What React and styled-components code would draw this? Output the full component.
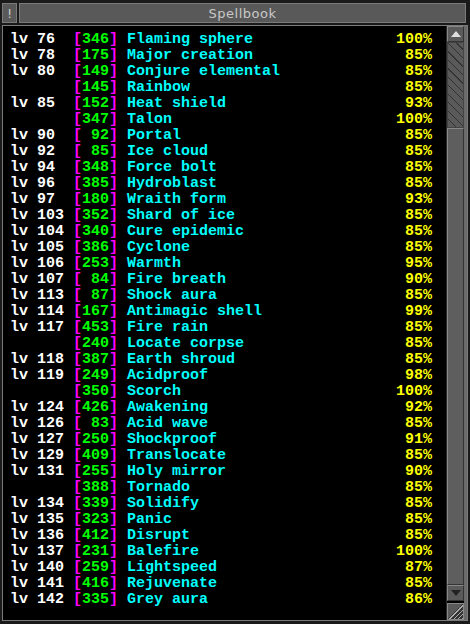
import React from 'react';
import styled, { createGlobalStyle } from 'styled-components';

const GlobalStyle = createGlobalStyle`
	html, body {
		margin: 0;
		padding: 0;
		background: #000;
	}
`;

const spells = [
	[76, '346', 'Flaming sphere', 100],
	[78, '175', 'Major creation', 85],
	[80, '149', 'Conjure elemental', 85],
	[null, '145', 'Rainbow', 85],
	[85, '152', 'Heat shield', 93],
	[null, '347', 'Talon', 100],
	[90, ' 92', 'Portal', 85],
	[92, ' 85', 'Ice cloud', 85],
	[94, '348', 'Force bolt', 85],
	[96, '385', 'Hydroblast', 85],
	[97, '180', 'Wraith form', 93],
	[103, '352', 'Shard of ice', 85],
	[104, '340', 'Cure epidemic', 85],
	[105, '386', 'Cyclone', 85],
	[106, '253', 'Warmth', 95],
	[107, ' 84', 'Fire breath', 90],
	[113, ' 87', 'Shock aura', 85],
	[114, '167', 'Antimagic shell', 99],
	[117, '453', 'Fire rain', 85],
	[null, '240', 'Locate corpse', 85],
	[118, '387', 'Earth shroud', 85],
	[119, '249', 'Acidproof', 98],
	[null, '350', 'Scorch', 100],
	[124, '426', 'Awakening', 92],
	[126, ' 83', 'Acid wave', 85],
	[127, '250', 'Shockproof', 91],
	[129, '409', 'Translocate', 85],
	[131, '255', 'Holy mirror', 90],
	[null, '388', 'Tornado', 85],
	[134, '339', 'Solidify', 85],
	[135, '323', 'Panic', 85],
	[136, '412', 'Disrupt', 85],
	[137, '231', 'Balefire', 100],
	[140, '259', 'Lightspeed', 87],
	[141, '416', 'Rejuvenate', 85],
	[142, '335', 'Grey aura', 86]
];

const Window = styled.div`
	width: 470px;
	height: 624px;
	background: #1a1a1a;
	display: flex;
	flex-direction: column;
	box-sizing: border-box;
`;
const TitleBar = styled.div`
	display: flex;
	gap: 2px;
	height: 20px;
	padding: 3px 4px 0 2px;
`;
const TitleButton = styled.div`
	width: 13px;
	background: #595959;
	border: 1px solid #7a7a7a;
	color: #c8c8c8;
	font-family: 'DejaVu Sans', sans-serif;
	font-size: 13px;
	display: flex;
	align-items: center;
	justify-content: center;
`;
const Title = styled.div`
	flex: 1;
	background: #595959;
	border: 1px solid #7a7a7a;
	color: #c8c8c8;
	font-family: 'DejaVu Sans', sans-serif;
	font-size: 13px;
	letter-spacing: 0.5px;
	display: flex;
	align-items: center;
	justify-content: center;
`;
const Frame = styled.div`
	flex: 1;
	margin: 2px 2px 3px 2px;
	border: 1px solid #7a7a7a;
	background: #000;
	display: flex;
	min-height: 0;
`;
const List = styled.div`
	flex: 1;
	padding: 6px 14px 0 7px;
	font-family: 'Liberation Mono', monospace;
	font-weight: bold;
	font-size: 15px;
	line-height: 16px;
	white-space: pre;
`;
const Row = styled.div`
	display: flex;
	height: 16px;
`;
const Level = styled.span`
	width: 63px;
	color: #ffffff;
`;
const Bracket = styled.span`
	color: #ff00ff;
`;
const Cost = styled.span`
	color: #00ff00;
`;
const Name = styled.span`
	flex: 1;
	margin-left: 9px;
	color: #00ffff;
`;
const Pct = styled.span`
	color: #ffff00;
`;
const Scrollbar = styled.div`
	width: 17px;
	display: flex;
	flex-direction: column;
	border-left: 1px solid #2a2a2a;
	border-right: 3px solid #6a6a6a;
	background: #000;
`;
const ArrowButton = styled.div`
	height: 14px;
	background: #5a5a5a;
	border: 1px solid #888;
	border-right-color: #333;
	border-bottom-color: #333;
	display: flex;
	align-items: center;
	justify-content: center;
`;
const Track = styled.div`
	flex: ${(p) => p.grow};
	background: repeating-linear-gradient(
		45deg,
		#5a5a5a 0px,
		#5a5a5a 5px,
		#333 5px,
		#333 6px
	);
	border: 1px solid #444;
`;
const Thumb = styled.div`
	flex: ${(p) => p.grow};
	background: #5e5e5e;
	border: 1px solid #8a8a8a;
	border-right-color: #333;
	border-bottom-color: #333;
`;
const Corner = styled.div`
	height: 15px;
	margin-top: 2px;
	background: linear-gradient(135deg, #5a5a5a 50%, transparent 50%),
		repeating-linear-gradient(-45deg, #aaa 0px, #aaa 1px, #333 1px, #333 3px);
	border: 1px solid #888;
`;

function Arrow({ up }) {
	return (
		<svg width="10" height="6" viewBox="0 0 10 6">
			{up ? (
				<polygon points="0,6 5,0 10,6" fill="#ddd" />
			) : (
				<polygon points="0,0 5,6 10,0" fill="#222" />
			)}
		</svg>
	);
}

export default function App() {
	return (
		<Window>
			<GlobalStyle />
			<TitleBar>
				<TitleButton>!</TitleButton>
				<Title>Spellbook</Title>
			</TitleBar>
			<Frame>
				<List>
					{spells.map(([lv, cost, name, pct], i) => (
						<Row key={i}>
							<Level>{lv ? `lv ${lv}` : ''}</Level>
							<Bracket>[</Bracket>
							<Cost>{cost}</Cost>
							<Bracket>]</Bracket>
							<Name>{name}</Name>
							<Pct>{pct}%</Pct>
						</Row>
					))}
				</List>
				<Scrollbar>
					<ArrowButton>
						<Arrow up />
					</ArrowButton>
					<Track grow={84} />
					<Thumb grow={458} />
					<ArrowButton>
						<Arrow />
					</ArrowButton>
					<Corner />
				</Scrollbar>
			</Frame>
		</Window>
	);
}
